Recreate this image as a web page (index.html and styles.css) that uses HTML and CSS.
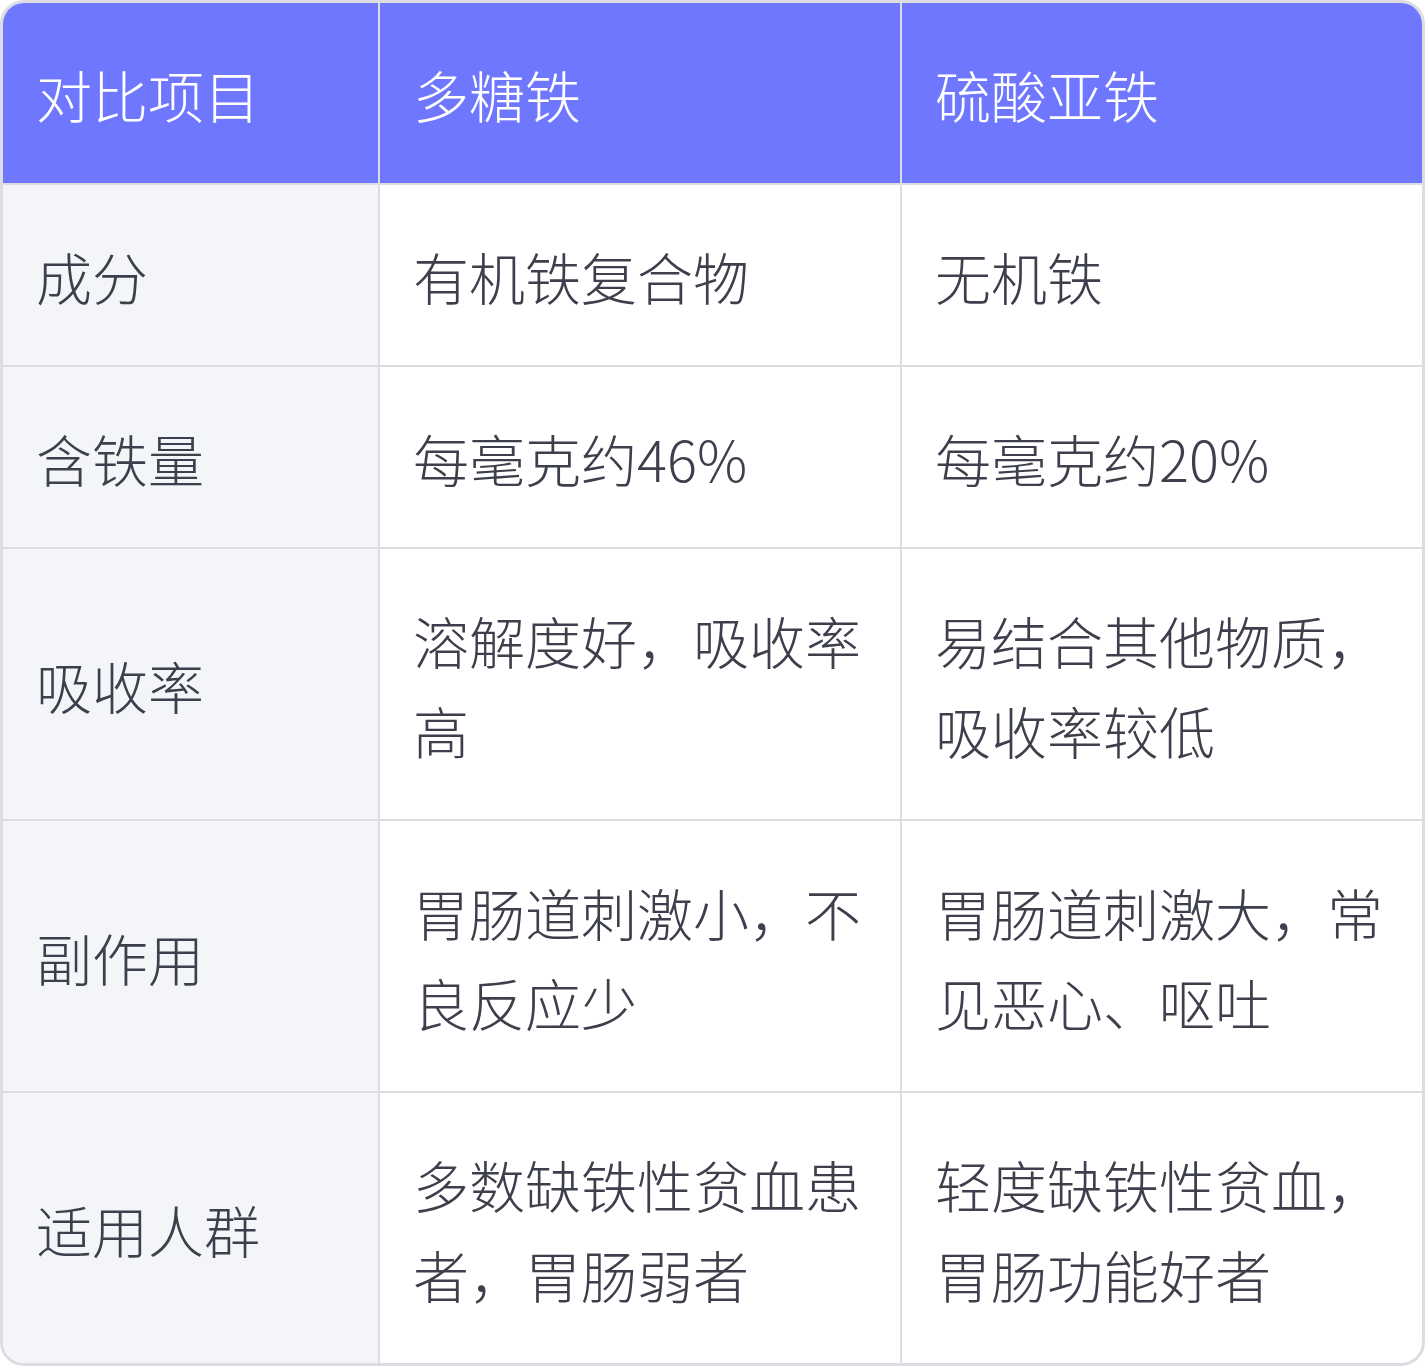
FILE: index.html
```html
<!DOCTYPE html>
<html lang="zh-CN">
<head>
<meta charset="utf-8">
<title>多糖铁与硫酸亚铁对比</title>
<link rel="stylesheet" href="styles.css">
</head>
<body>
<div class="wrap">
  <table class="cmp">
    <thead>
      <tr>
        <th class="c1">对比项目</th>
        <th class="c2">多糖铁</th>
        <th class="c3">硫酸亚铁</th>
      </tr>
    </thead>
    <tbody>
      <tr>
        <td class="c1">成分</td>
        <td class="c2">有机铁复合物</td>
        <td class="c3">无机铁</td>
      </tr>
      <tr>
        <td class="c1">含铁量</td>
        <td class="c2">每毫克约46%</td>
        <td class="c3">每毫克约20%</td>
      </tr>
      <tr>
        <td class="c1">吸收率</td>
        <td class="c2">溶解度好，吸收率高</td>
        <td class="c3">易结合其他物质，吸收率较低</td>
      </tr>
      <tr>
        <td class="c1">副作用</td>
        <td class="c2">胃肠道刺激小，不良反应少</td>
        <td class="c3">胃肠道刺激大，常见恶心、呕吐</td>
      </tr>
      <tr class="last">
        <td class="c1">适用人群</td>
        <td class="c2">多数缺铁性贫血患者，胃肠弱者</td>
        <td class="c3">轻度缺铁性贫血，胃肠功能好者</td>
      </tr>
    </tbody>
  </table>
</div>
</body>
</html>
```

FILE: styles.css
```css
html, body {
  margin: 0;
  padding: 0;
  background: #ffffff;
}

.wrap {
  width: 1425px;
  height: 1366px;
  box-sizing: border-box;
  border: 3px solid #dcdde3;
  border-radius: 24px;
  overflow: hidden;
  background: #ffffff;
}

.cmp {
  border-collapse: separate;
  border-spacing: 0;
  table-layout: fixed;
  width: 1419px;
  font-family: "Noto Sans CJK SC", "Noto Sans", sans-serif;
  font-size: 56px;
  font-weight: 200;
  line-height: 90px;
  color: #3d404c;
}

.cmp th,
.cmp td {
  box-sizing: border-box;
  padding: 46px 33px 44px;
  text-align: left;
  vertical-align: middle;
  border-right: 2px solid #dcdde3;
  border-bottom: 2px solid #dcdde3;
  font-weight: 200;
}

.cmp .c1 { width: 377px; }
.cmp .c2 { width: 522px; }
.cmp .c3 { width: 520px; border-right: none; }

.cmp thead th {
  background: #7077ff;
  color: #ffffff;
}

.cmp tbody td.c1 {
  background: #f4f5f9;
}

.cmp tbody td.c2,
.cmp tbody td.c3 {
  vertical-align: top;
}

.cmp tr.last td {
  border-bottom: none;
}
```
